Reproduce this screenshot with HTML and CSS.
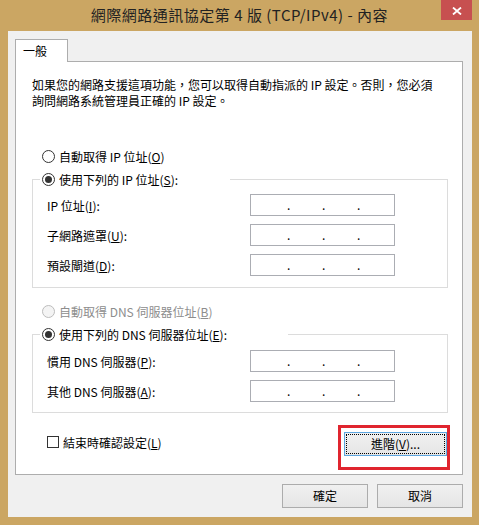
FILE: index.html
```html
<!DOCTYPE html>
<html lang="zh-Hant">
<head>
<meta charset="utf-8">
<title>網際網路通訊協定第 4 版 (TCP/IPv4) - 內容</title>
<link rel="stylesheet" href="styles.css">
</head>
<body>
<div class="window">
  <div class="titlebar">
    <span class="title">網際網路通訊協定第 4 版 (TCP/IPv4) - 內容</span>
    <span class="close"><svg width="10" height="8" viewBox="0 0 10 8"><path d="M1 0.5 L9 7.5 M9 0.5 L1 7.5" stroke="#fff" stroke-width="1.8" fill="none"/></svg></span>
  </div>
  <div class="client">
    <div class="tabs"><div class="tab">一般</div></div>
    <div class="panel">
      <p class="desc">如果您的網路支援這項功能，您可以取得自動指派的 IP 設定。否則，您必須<br>詢問網路系統管理員正確的 IP 設定。</p>

      <div class="option first"><span class="radio"></span><span>自動取得 IP 位址(<u>O</u>)</span></div>
      <fieldset class="group group-ip">
        <legend class="legend legend-ip"><span class="radio checked"></span><span>使用下列的 IP 位址(<u>S</u>):</span></legend>
        <div class="rows">
          <div class="row"><span class="label">IP 位址(<u>I</u>):</span><span class="ipfield"><span class="dot">.</span><span class="dot">.</span><span class="dot">.</span></span></div>
          <div class="row"><span class="label">子網路遮罩(<u>U</u>):</span><span class="ipfield"><span class="dot">.</span><span class="dot">.</span><span class="dot">.</span></span></div>
          <div class="row"><span class="label">預設閘道(<u>D</u>):</span><span class="ipfield"><span class="dot">.</span><span class="dot">.</span><span class="dot">.</span></span></div>
        </div>
      </fieldset>

      <div class="option disabled"><span class="radio off"></span><span>自動取得 DNS 伺服器位址(<u>B</u>)</span></div>
      <fieldset class="group group-dns">
        <legend class="legend legend-dns"><span class="radio checked"></span><span>使用下列的 DNS 伺服器位址(<u>E</u>):</span></legend>
        <div class="rows">
          <div class="row"><span class="label">慣用 DNS 伺服器(<u>P</u>):</span><span class="ipfield"><span class="dot">.</span><span class="dot">.</span><span class="dot">.</span></span></div>
          <div class="row"><span class="label">其他 DNS 伺服器(<u>A</u>):</span><span class="ipfield"><span class="dot">.</span><span class="dot">.</span><span class="dot">.</span></span></div>
        </div>
      </fieldset>

      <div class="footer-row">
        <div class="check-label"><span class="checkbox"></span><span>結束時確認設定(<u>L</u>)</span></div>
        <div class="adv-wrap">
          <button class="btn btn-adv">進階(<u>V</u>)...</button>
          <span class="annot"></span>
        </div>
      </div>
    </div>
    <div class="buttons">
      <button class="btn">確定</button>
      <button class="btn">取消</button>
    </div>
  </div>
</div>
</body>
</html>
```

FILE: styles.css
```css
* { box-sizing: border-box; }
html, body { margin: 0; padding: 0; }
body {
  width: 479px;
  height: 525px;
  overflow: hidden;
  background: #cba663;
  font-family: "Noto Sans CJK TC", "Noto Sans", sans-serif;
  font-size: 12px;
  color: #000;
}
.window {
  height: 525px;
  display: flex;
  flex-direction: column;
}
.titlebar {
  position: relative;
  height: 31px;
  line-height: 30px;
  text-align: center;
  font-size: 15px;
  letter-spacing: 0.5px;
  color: #222;
}
.close {
  position: absolute;
  top: 0;
  right: 7px;
  width: 31px;
  height: 20px;
  background: #c75050;
  display: flex;
  align-items: center;
  justify-content: center;
  padding-top: 2px;
  padding-left: 1px;
}
.close svg { display: block; }
.client {
  margin: 0 7px 0 8px;
  height: 486px;
  background: #f0f0f0;
  padding: 8px 9px 9px 7px;
  display: flex;
  flex-direction: column;
}
.tabs {
  display: flex;
  height: 22px;
}
.tab {
  position: relative;
  z-index: 1;
  width: 53px;
  height: 23px;
  background: #fff;
  border: 1px solid #adadad;
  border-bottom: none;
  padding-left: 7px;
  line-height: 21px;
}
.panel {
  background: #fff;
  border: 1px solid #adadad;
  height: 414px;
  padding: 15px 14px 0 16px;
}
.desc {
  margin: 0;
  line-height: 16px;
}
.option {
  display: flex;
  align-items: center;
  height: 16px;
  padding-left: 10px;
}
.option.first { margin-top: 39px; }
.option.disabled { margin-top: 15px; color: #8d8d8d; }
.radio {
  flex: none;
  width: 13px;
  height: 13px;
  border: 1px solid #333;
  border-radius: 50%;
  background: #fff;
  margin-right: 4px;
  display: flex;
  align-items: center;
  justify-content: center;
}
.radio.checked::after {
  content: "";
  width: 7px;
  height: 7px;
  border-radius: 50%;
  background: #333;
}
.radio.off {
  border-color: #bcbcbc;
  background: #f4f4f4;
}
.group {
  margin: 7px 0 0;
  padding: 6px 0 11px 7px;
  border: 1px solid #dcdcdc;
  min-width: 0;
}
.group-dns { padding-top: 7px; padding-bottom: 10px; }
.legend {
  display: flex;
  align-items: center;
  height: 17px;
  padding: 0 0 0 2px;
}
.legend-ip { width: 190px; }
.legend-dns { width: 248px; }
.rows {
  display: flex;
  flex-direction: column;
  gap: 8px;
  padding-left: 7px;
}
.row {
  display: grid;
  grid-template-columns: 203px 145px;
  align-items: center;
  height: 22px;
}
.ipfield {
  height: 22px;
  border: 1px solid #abadb3;
  background: #fff;
  display: flex;
  align-items: center;
  gap: 32px;
  padding-left: 36px;
  line-height: 20px;
}
.dot {
  width: 3px;
  text-align: center;
}
.footer-row {
  margin-top: 19px;
  height: 24px;
  display: flex;
  justify-content: space-between;
  align-items: center;
}
.check-label {
  display: flex;
  align-items: center;
  margin-left: 15px;
  margin-bottom: 4px;
}
.checkbox {
  width: 12px;
  height: 12px;
  border: 1px solid #333;
  background: #fff;
  margin-right: 4px;
}
.adv-wrap {
  position: relative;
  margin-right: 1px;
}
.btn {
  display: block;
  width: 86px;
  height: 24px;
  padding: 0;
  border: 1px solid #acacac;
  background: linear-gradient(#f0f0f0, #e5e5e5);
  font: inherit;
  line-height: 22px;
  color: #000;
  text-align: center;
}
.btn-adv {
  width: 103px;
  border-color: #5ea6e0;
  outline: 1px dotted #000;
  outline-offset: -3px;
}
.annot {
  position: absolute;
  left: -6px;
  top: -7px;
  width: 112px;
  height: 45px;
  border: 3px solid #e0252f;
  pointer-events: none;
}
.buttons {
  display: flex;
  justify-content: flex-end;
  gap: 9px;
  margin-top: 9px;
}
```
